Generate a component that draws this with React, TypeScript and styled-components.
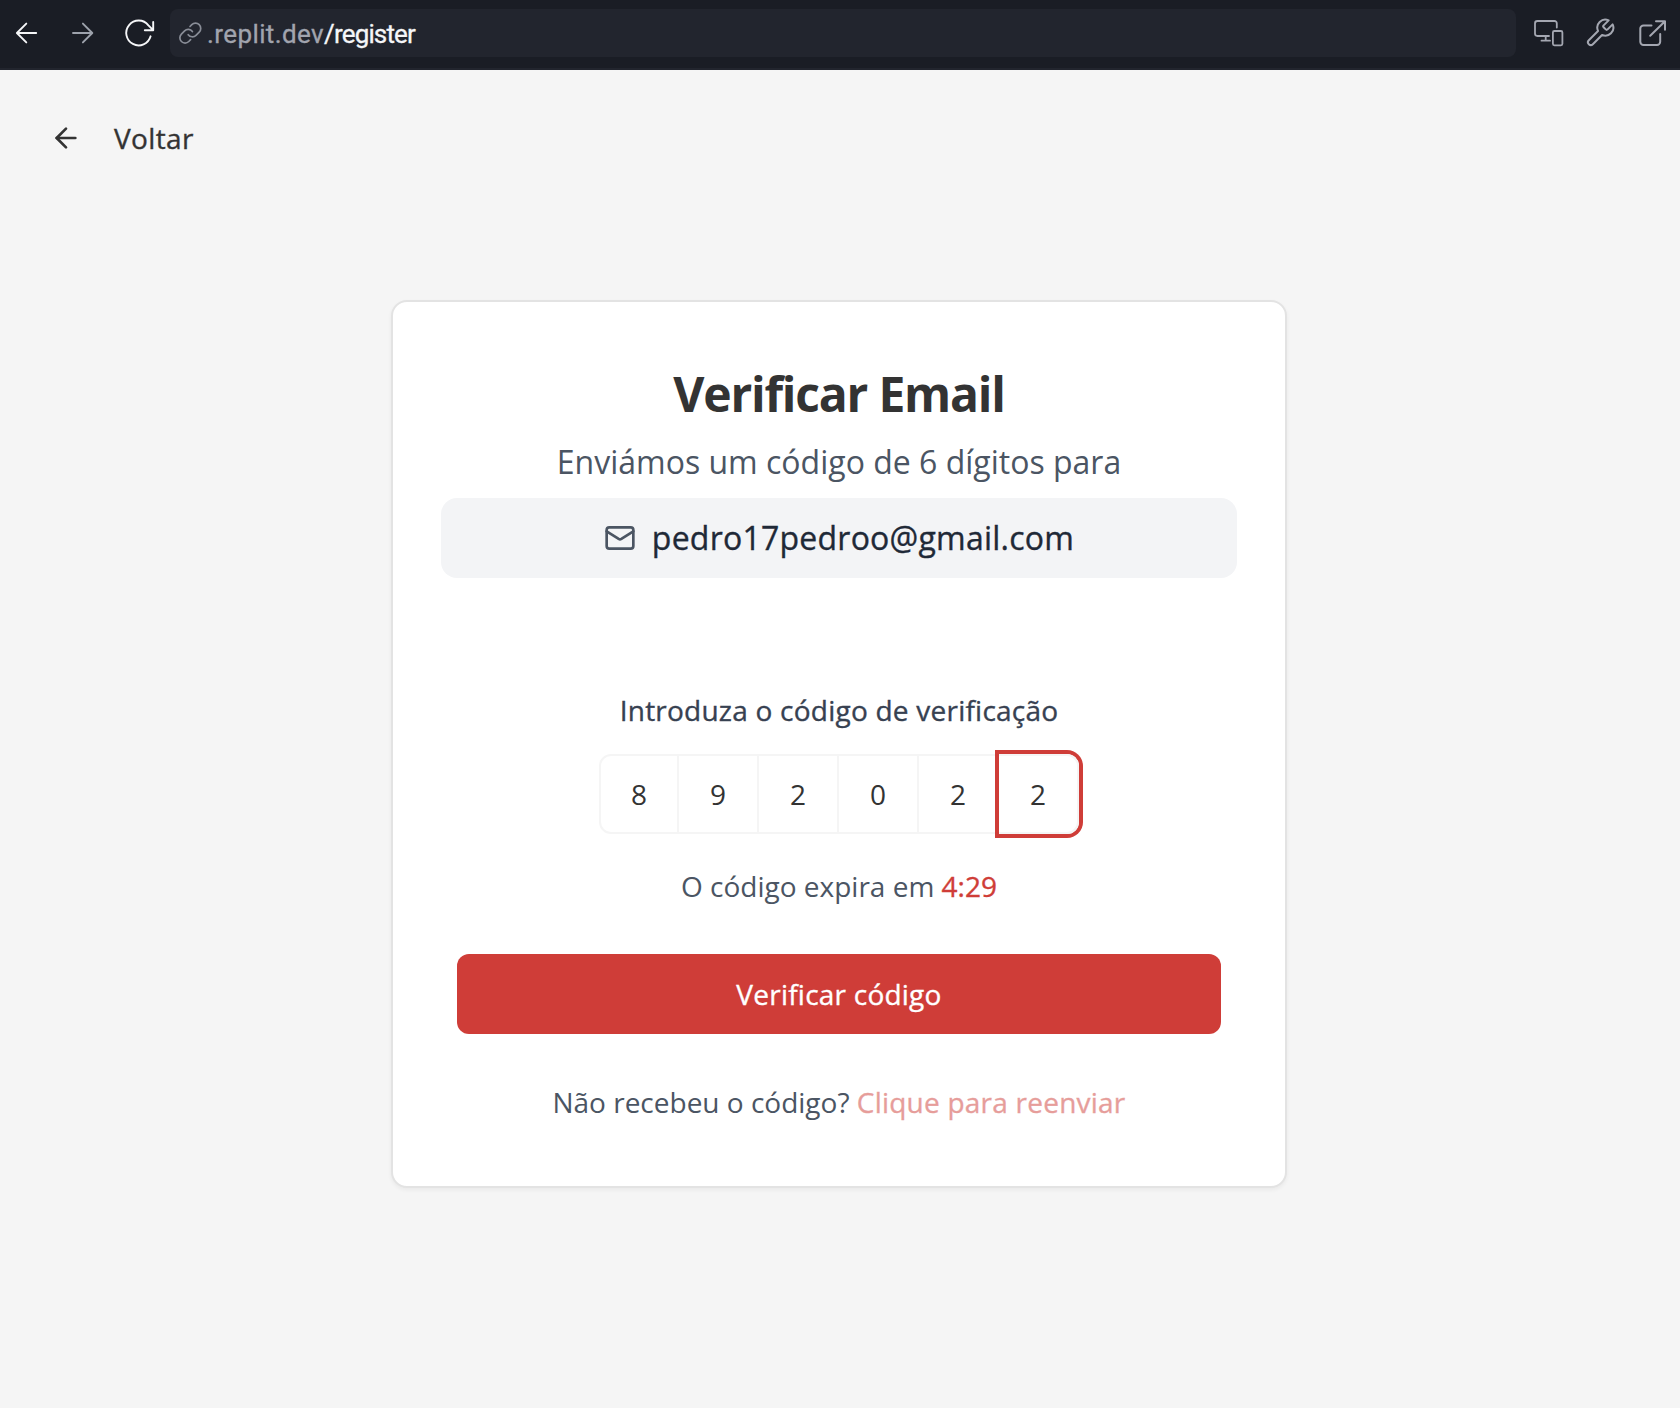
import React from "react";
import styled, { createGlobalStyle, css } from "styled-components";
import { ArrowLeft, Mail } from "lucide-react";

const GlobalStyle = createGlobalStyle`
  *, *::before, *::after { box-sizing: border-box; }
  body { margin: 0; background: #f5f5f5; }
`;

/* Open Sans has no medium cut here, so thicken the regular one slightly. */
const medium = css`
  font-weight: 400;
  letter-spacing: 0.23px;
  -webkit-text-stroke: 0.35px currentColor;
`;

const Page = styled.div`
  display: flex;
  flex-direction: column;
  width: 1680px;
  height: 1408px;
  background: #f5f5f5;
  color: #333333;
  font-family: "Open Sans", "Noto Sans", sans-serif;
  font-size: 28px;
  line-height: 40px;
`;

const BrowserBar = styled.header`
  display: flex;
  align-items: flex-start;
  height: 70px;
  flex: none;
  padding: 9px 12px 0 11px;
  background: #1a1d25;
  border-bottom: 2px solid #22252e;
`;

const BarButton = styled.button<{ $tone: string; $gap: number }>`
  display: flex;
  align-items: center;
  justify-content: center;
  width: 32px;
  height: 48px;
  padding: 0;
  margin: 0 ${(p) => p.$gap}px 0 0;
  border: 0;
  background: none;
  color: ${(p) => p.$tone};
`;

const Glyph = styled.svg`
  display: block;
  flex: none;
  fill: none;
  stroke: currentColor;
  stroke-linecap: round;
  stroke-linejoin: round;
`;

const AddressBar = styled.div`
  display: flex;
  align-items: center;
  flex: 1;
  height: 48px;
  margin-right: 16px;
  padding-left: 4px;
  border-radius: 8px;
  background: #22252e;
  color: #898d97;
`;

const Url = styled.span`
  display: flex;
  padding-top: 2px;
  font-family: Roboto, "Liberation Sans", sans-serif;
  font-size: 26px;
  line-height: 48px;
  white-space: nowrap;
`;

const Host = styled.span`
  color: #a1a4ae;
  letter-spacing: 0.4px;
  -webkit-text-stroke: 0.3px currentColor;
`;

const Path = styled.span`
  color: #f5f6f8;
  letter-spacing: -0.85px;
  -webkit-text-stroke: 0.3px currentColor;
`;

const BackLink = styled.a`
  display: flex;
  align-items: center;
  align-self: flex-start;
  gap: 32px;
  margin: 48px 0 0 50px;
  ${medium}
  letter-spacing: 0.35px;
`;

const Card = styled.main`
  display: flex;
  flex-direction: column;
  width: 896px;
  height: 888px;
  margin: 142px 0 0 391px;
  padding: 60px 48px 0;
  background: #ffffff;
  border: 2px solid #e3e3e3;
  border-radius: 16px;
  box-shadow: 0 2px 4px rgba(0, 0, 0, 0.05);
  text-align: center;
`;

const Title = styled.h1`
  margin: 0 0 12px;
  font-size: 48px;
  line-height: 64px;
  font-weight: 700;
  letter-spacing: -1.2px;
`;

const Subtitle = styled.p`
  margin: 0 0 12px;
  font-size: 32px;
  line-height: 48px;
  color: #4b5563;
`;

const EmailChip = styled.div`
  display: flex;
  align-items: center;
  justify-content: center;
  gap: 16px;
  height: 80px;
  border-radius: 16px;
  background: #f3f4f6;
  color: #4b5563;
`;

const EmailText = styled.span`
  font-size: 32px;
  line-height: 48px;
  color: #1f2937;
  ${medium}
`;

const Form = styled.form`
  display: flex;
  flex-direction: column;
  align-items: center;
  margin: 112px 16px 0;
`;

const Label = styled.label`
  margin-bottom: 24px;
  color: #374151;
  ${medium}
`;

const CodeRow = styled.div`
  display: flex;
`;

const CodeCell = styled.div<{ $active: boolean }>`
  display: flex;
  align-items: center;
  justify-content: center;
  width: 80px;
  height: 80px;
  border: 2px solid #f5f5f5;
  border-left-width: 0;
  &:first-child {
    border-left-width: 2px;
    border-radius: 12px 0 0 12px;
  }
  &:last-child {
    border-radius: 0 12px 12px 0;
  }
  box-shadow: ${(p) => (p.$active ? "0 0 0 4px #cf3d38" : "none")};
`;

const Expiry = styled.p`
  margin: 32px 0 48px;
  color: #4b5563;
`;

const Timer = styled.span`
  ${medium}
  letter-spacing: 0;
  color: #cf3d38;
`;

const SubmitButton = styled.button`
  width: 100%;
  height: 80px;
  padding: 0;
  border: 0;
  border-radius: 12px;
  background: #cf3d38;
  color: #ffffff;
  font: inherit;
  ${medium}
`;

const Resend = styled.p`
  margin: 48px 0 0;
  color: #4b5563;
`;

const ResendLink = styled.span`
  ${medium}
  color: #cf3d38;
  opacity: 0.5;
`;

const code = ["8", "9", "2", "0", "2", "2"];

export default function App() {
  return (
    <>
      <GlobalStyle />
      <Page>
        <BrowserBar>
          <BarButton $tone="#f5f6f8" $gap={24} aria-label="Back">
            <Glyph width="32" height="32" viewBox="0 0 32 32" strokeWidth="1.9">
              <path d="M25.2 16H6M15.3 6.6 5.9 16l9.4 9.4" />
            </Glyph>
          </BarButton>
          <BarButton $tone="#9da2ac" $gap={24} aria-label="Forward">
            <Glyph width="32" height="32" viewBox="0 0 32 32" strokeWidth="1.9">
              <path d="M6 16h19.2M15.9 6.6l9.4 9.4-9.4 9.4" />
            </Glyph>
          </BarButton>
          <BarButton $tone="#f5f6f8" $gap={15} aria-label="Reload">
            <Glyph width="32" height="32" viewBox="0 0 32 32" strokeWidth="1.9">
              <path d="M27.6 19.3A12.4 12.4 0 1 1 25.4 8.3L30.2 13.2M30.2 5v8.3h-8.4" />
            </Glyph>
          </BarButton>
          <AddressBar>
            <Glyph width="33" height="32" viewBox="0 0 33 32" strokeWidth="1.7">
              <path d="M14.2 17.7a5.2 5.2 0 0 0 7.8.6l3.2-3.2a5.2 5.2 0 0 0-7.4-7.4l-1.8 1.8M18.4 14.5a5.2 5.2 0 0 0-7.8-.6l-3.2 3.2a5.2 5.2 0 0 0 7.4 7.4l1.8-1.8" />
            </Glyph>
            <Url>
              <Host>.replit.dev</Host>
              <Path>/register</Path>
            </Url>
          </AddressBar>
          <BarButton $tone="#a4a7b1" $gap={20} aria-label="Devices">
            <Glyph width="32" height="32" viewBox="0 0 32 32" strokeWidth="1.8">
              <path d="M17 19H5.4A2.4 2.4 0 0 1 3 16.600V6.400A2.400 2.400 0 0 1 5.400 4h17A2.400 2.400 0 0 1 24.800 6.400V10.500M13.700 19v4.500M9.500 23.700h8.500" />
              <rect x="20.900" y="14" width="9.500" height="14.300" rx="1.500" />
            </Glyph>
          </BarButton>
          <BarButton $tone="#a4a7b1" $gap={20} aria-label="Tools">
            <Glyph width="32" height="32" viewBox="0 0 24 24" strokeWidth="1.5">
              <path d="M14.700 6.300a1 1 0 0 0 0 1.400l1.600 1.600a1 1 0 0 0 1.400 0l3.770-3.770a6 6 0 0 1-7.940 7.940l-6.910 6.910a2.120 2.120 0 0 1-3-3l6.910-6.910a6 6 0 0 1 7.940-7.940l-3.760 3.760z" />
            </Glyph>
          </BarButton>
          <BarButton $tone="#a4a7b1" $gap={0} aria-label="Open in new tab">
            <Glyph width="32" height="32" viewBox="0 0 32 32" strokeWidth="2">
              <path d="M15.500 8.400H7.500A3.200 3.200 0 0 0 4.300 11.600v13.200a3.200 3.200 0 0 0 3.200 3.200h13.500a3.200 3.200 0 0 0 3.200-3.200V17M20 4.200h9v8.500M29 4.200 14.200 18.700" />
            </Glyph>
          </BarButton>
        </BrowserBar>
        <BackLink>
          <ArrowLeft size={32} />
          <span>Voltar</span>
        </BackLink>
        <Card>
          <Title>Verificar Email</Title>
          <Subtitle>Enviámos um código de 6 dígitos para</Subtitle>
          <EmailChip>
            <Mail size={32} />
            <EmailText>pedro17pedroo@gmail.com</EmailText>
          </EmailChip>
          <Form>
            <Label>Introduza o código de verificação</Label>
            <CodeRow>
              {code.map((digit, i) => (
                <CodeCell key={i} $active={i === code.length - 1}>
                  {digit}
                </CodeCell>
              ))}
            </CodeRow>
            <Expiry>
              O código expira em <Timer>4:29</Timer>
            </Expiry>
            <SubmitButton type="button">Verificar código</SubmitButton>
            <Resend>
              Não recebeu o código? <ResendLink>Clique para reenviar</ResendLink>
            </Resend>
          </Form>
        </Card>
      </Page>
    </>
  );
}
